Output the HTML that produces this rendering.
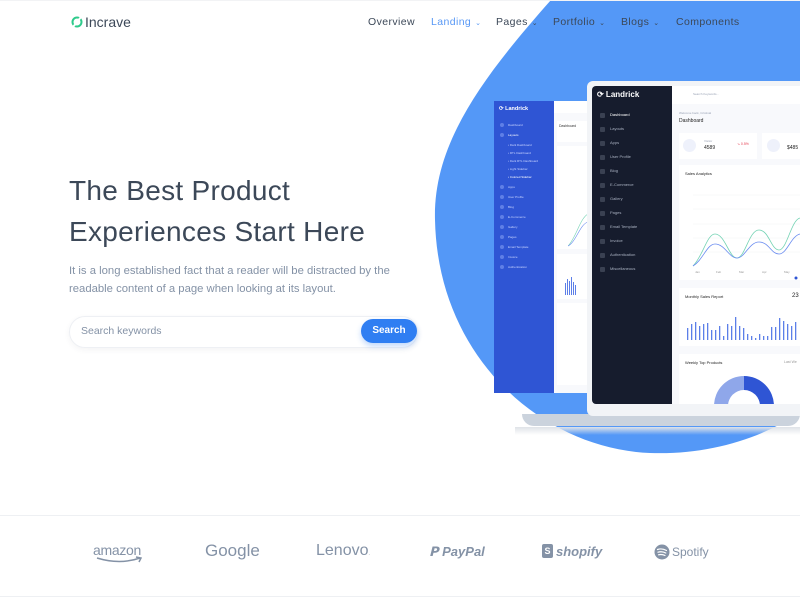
<!DOCTYPE html>
<html><head><meta charset="utf-8">
<style>
*{margin:0;padding:0;box-sizing:border-box}
body{width:800px;height:600px;overflow:hidden;background:#fff;font-family:"Liberation Sans",sans-serif;position:relative}
.abs{position:absolute}
.nav a{position:absolute;top:16px;font-size:10.5px;color:#3c4858;letter-spacing:.4px;white-space:nowrap}
.car{font-size:7px;margin-left:4px}
h1{position:absolute;left:69px;top:170px;font-size:28px;font-weight:normal;color:#3c4858;line-height:41px;letter-spacing:.3px}
.p{position:absolute;left:69px;top:262px;font-size:11.3px;color:#8492a6;line-height:18px;width:360px}
.t{font-size:3px;color:#9aa3b5;white-space:nowrap}
.d{font-size:4px;color:#a9b1c1;white-space:nowrap;position:absolute;left:18px}
.ic{position:absolute;left:8px;width:5px;height:5px;border-radius:1px;background:#3a4152}
.bi{position:absolute;left:6px;width:4px;height:4px;border-radius:50%;background:#5f7fe6}
.bl{position:absolute;font-size:3px;color:#c9d4ff;left:14px;white-space:nowrap}
.logo{position:absolute;top:543px;font-size:15px;color:#8492a6;white-space:nowrap}
</style></head><body>
<svg class="abs" style="left:0;top:0" width="800" height="600">
<path d="M551,0 L800,0 L800,412 C760,440 705,455 650,453 C545,449 438,360 435,220 C433,145 480,80 551,0 Z" fill="#5498f7"/>
<line x1="0" y1="515.5" x2="800" y2="515.5" stroke="#eef0f3"/>
<line x1="0" y1="596.5" x2="800" y2="596.5" stroke="#eef0f3"/>
<line x1="0" y1="0.5" x2="800" y2="0.5" stroke="#f2f3f5"/>
</svg>
<!-- header -->
<svg class="abs" style="left:70px;top:15px" width="14" height="14"><circle cx="7" cy="7" r="4.5" fill="none" stroke="#2eca8b" stroke-width="2"/><path d="M3,12 L11,2" stroke="#fff" stroke-width="2"/></svg>
<div class="abs" style="left:85px;top:14px;font-size:14px;color:#3c4858">Incrave</div>
<div class="nav">
<a style="left:368px">Overview</a>
<a style="left:431px;color:#5898f5">Landing<span class="car">⌄</span></a>
<a style="left:496px">Pages<span class="car">⌄</span></a>
<a style="left:553px">Portfolio<span class="car">⌄</span></a>
<a style="left:621px">Blogs<span class="car">⌄</span></a>
<a style="left:676px">Components</a>
</div>
<h1>The Best Product<br>Experiences Start Here</h1>
<div class="p">It is a long established fact that a reader will be distracted by the readable content of a page when looking at its layout.</div>
<div class="abs" style="left:69px;top:316px;width:349px;height:32px;border:1px solid #eef0f4;border-radius:16px;box-shadow:0 2px 6px rgba(60,72,88,.06)"></div>
<div class="abs" style="left:81px;top:325px;font-size:10.5px;color:#8492a6">Search keywords</div>
<div class="abs" style="left:361px;top:319px;width:56px;height:24px;border-radius:12px;background:#2f7ef2;color:#fff;font-size:10px;font-weight:bold;text-align:center;line-height:24px;box-shadow:0 3px 6px rgba(47,126,242,.3)">Search</div>

<!-- back dashboard -->
<div class="abs" style="left:494px;top:101px;width:60px;height:292px;background:#2f55d4">
<div class="abs" style="left:5px;top:5px;font-size:5.5px;color:#fff;font-weight:bold">⟳ Landrick</div>
<div class="bi" style="top:22px"></div><div class="bl" style="top:22px">Dashboard</div>
<div class="bi" style="top:32px"></div><div class="bl" style="top:32px;color:#fff">Layouts</div>
<div class="bl" style="top:42px">• Dark Dashboard</div>
<div class="bl" style="top:50px">• RTL Dashboard</div>
<div class="bl" style="top:58px">• Dark RTL Dashboard</div>
<div class="bl" style="top:66px">• Light Sidebar</div>
<div class="bl" style="top:74px;color:#fff">• Colored Sidebar</div>
<div class="bi" style="top:84px"></div><div class="bl" style="top:84px">Apps</div>
<div class="bi" style="top:94px"></div><div class="bl" style="top:94px">User Profile</div>
<div class="bi" style="top:104px"></div><div class="bl" style="top:104px">Blog</div>
<div class="bi" style="top:114px"></div><div class="bl" style="top:114px">E-Commerce</div>
<div class="bi" style="top:124px"></div><div class="bl" style="top:124px">Gallery</div>
<div class="bi" style="top:134px"></div><div class="bl" style="top:134px">Pages</div>
<div class="bi" style="top:144px"></div><div class="bl" style="top:144px">Email Template</div>
<div class="bi" style="top:154px"></div><div class="bl" style="top:154px">Invoice</div>
<div class="bi" style="top:164px"></div><div class="bl" style="top:164px">Authentication</div>
</div>
<div class="abs" style="left:554px;top:101px;width:34px;height:292px;background:#f8f9fc;overflow:hidden">
<div class="abs" style="left:0;top:0;width:34px;height:12px;background:#fff"></div>
<div class="abs" style="left:3px;top:20px;width:31px;height:21px;background:#fff"></div>
<div class="abs" style="left:3px;top:45px;width:31px;height:20px;background:#fff"></div>
<div class="abs" style="left:3px;top:60px;width:31px;height:88px;background:#fff"></div>
<div class="abs" style="left:3px;top:153px;width:31px;height:45px;background:#fff"></div>
<div class="abs" style="left:3px;top:202px;width:31px;height:82px;background:#fff"></div>
<div class="abs" style="left:5px;top:23px;font-size:3.5px;color:#333">Dashboard</div>
<svg class="abs" style="left:10px;top:170px" width="24" height="26"><g fill="#5c7fe8"><rect x="1" y="12" width="1" height="12"/><rect x="3" y="8" width="1" height="16"/><rect x="5" y="10" width="1" height="14"/><rect x="7" y="6" width="1" height="18"/><rect x="9" y="11" width="1" height="13"/><rect x="11" y="14" width="1" height="10"/></g></svg>
<svg class="abs" style="left:14px;top:107px" width="20" height="40"><path d="M0,38 C8,30 12,10 20,6" stroke="#74d3b4" fill="none" stroke-width=".6"/><path d="M0,38 C8,34 12,16 20,14" stroke="#6a8cf0" fill="none" stroke-width=".6"/></svg>
</div>

<!-- laptop base -->
<div class="abs" style="left:522px;top:414px;width:278px;height:12px;background:#cbd3dd;border-radius:0 0 40px 40px"></div>
<div class="abs" style="left:515px;top:427px;width:285px;height:8px;background:linear-gradient(#dfe3e8,rgba(255,255,255,0))"></div>
<!-- front laptop -->
<div class="abs" style="left:587px;top:81px;width:220px;height:335px;background:#f2f4f7;border-radius:6px"></div>
<div class="abs" style="left:592px;top:86px;width:80px;height:318px;background:#161c2d;border-radius:4px 0 0 4px">
<div class="abs" style="left:5px;top:4px;font-size:8px;color:#fff;font-weight:bold">⟳ Landrick</div>
<div class="ic" style="top:27px;background:#3a4152"></div><div class="d" style="top:26px;color:#fff">Dashboard</div>
<div class="ic" style="top:41px"></div><div class="d" style="top:40px">Layouts</div>
<div class="ic" style="top:55px"></div><div class="d" style="top:54px">Apps</div>
<div class="ic" style="top:69px"></div><div class="d" style="top:68px">User Profile</div>
<div class="ic" style="top:83px"></div><div class="d" style="top:82px">Blog</div>
<div class="ic" style="top:97px"></div><div class="d" style="top:96px">E-Commerce</div>
<div class="ic" style="top:111px"></div><div class="d" style="top:110px">Gallery</div>
<div class="ic" style="top:125px"></div><div class="d" style="top:124px">Pages</div>
<div class="ic" style="top:139px"></div><div class="d" style="top:138px">Email Template</div>
<div class="ic" style="top:153px"></div><div class="d" style="top:152px">Invoice</div>
<div class="ic" style="top:167px"></div><div class="d" style="top:166px">Authentication</div>
<div class="ic" style="top:181px"></div><div class="d" style="top:180px">Miscellaneous</div>
</div>
<div class="abs" style="left:672px;top:86px;width:128px;height:318px;background:#f8f9fc;overflow:hidden">
<div class="abs" style="left:0;top:0;width:128px;height:18px;background:#fff"></div>
<div class="abs t" style="left:21px;top:6px">Search Keywords...</div>
<div class="abs t" style="left:7px;top:25px">Welcome back, Cristinal</div>
<div class="abs" style="left:7px;top:32px;font-size:5px;color:#222">Dashboard</div>
<div class="abs" style="left:7px;top:47px;width:78px;height:26px;background:#fff"></div>
<div class="abs" style="left:11px;top:53px;width:13px;height:13px;border-radius:50%;background:#eef1fb"></div>
<div class="abs t" style="left:32px;top:53px">Visitor</div>
<div class="abs" style="left:32px;top:59px;font-size:5px;color:#222">4589</div>
<div class="abs" style="left:65px;top:56px;font-size:3.5px;color:#e43f52">↘ 0.5%</div>
<div class="abs" style="left:90px;top:47px;width:40px;height:26px;background:#fff"></div>
<div class="abs" style="left:95px;top:53px;width:13px;height:13px;border-radius:50%;background:#eef1fb"></div>
<div class="abs" style="left:115px;top:59px;font-size:5px;color:#222">$485</div>
<div class="abs" style="left:7px;top:79px;width:128px;height:115px;background:#fff"></div>
<div class="abs" style="left:13px;top:85px;font-size:4px;color:#222">Sales Analytics</div>
<svg class="abs" style="left:7px;top:100px" width="121" height="94">
<g stroke="#f0f1f4" stroke-width=".5"><line x1="14" y1="9" x2="121" y2="9"/><line x1="14" y1="23" x2="121" y2="23"/><line x1="14" y1="38" x2="121" y2="38"/><line x1="14" y1="52" x2="121" y2="52"/><line x1="14" y1="66" x2="121" y2="66"/></g>
<path d="M14,80 C24,70 28,48 36,48 C46,48 50,72 58,72 C66,72 70,44 80,44 C90,44 92,64 100,64 C108,64 112,34 121,32" stroke="#74d3b4" fill="none" stroke-width=".8"/>
<path d="M14,80 C24,74 28,58 36,58 C46,58 50,72 58,72 C66,72 70,56 80,56 C90,56 92,68 100,68 C108,68 112,50 121,48" stroke="#6a8cf0" fill="none" stroke-width=".8"/>
<g font-size="3" fill="#999" font-family="Liberation Sans"><text x="16" y="87">Jan</text><text x="37" y="87">Feb</text><text x="60" y="87">Mar</text><text x="83" y="87">Apr</text><text x="105" y="87">May</text></g>
<circle cx="117" cy="92" r="1.5" fill="#2f55d4"/>
</svg>
<div class="abs" style="left:7px;top:202px;width:128px;height:58px;background:#fff"></div>
<div class="abs" style="left:13px;top:208px;font-size:4px;color:#222">Monthly Sales Report</div>
<div class="abs" style="left:120px;top:207px;font-size:6px;color:#222">23</div>
<svg class="abs" style="left:15px;top:228px" width="113" height="30"><g fill="#5c7fe8">
<rect x="0" y="14" width="1.3" height="12"/><rect x="4" y="10" width="1.3" height="16"/><rect x="8" y="8" width="1.3" height="18"/><rect x="12" y="12" width="1.3" height="14"/><rect x="16" y="10" width="1.3" height="16"/><rect x="20" y="9" width="1.3" height="17"/><rect x="24" y="16" width="1.3" height="10"/><rect x="28" y="16" width="1.3" height="10"/><rect x="32" y="12" width="1.3" height="14"/><rect x="36" y="22" width="1.3" height="4"/><rect x="40" y="10" width="1.3" height="16"/><rect x="44" y="12" width="1.3" height="14"/><rect x="48" y="3" width="1.3" height="23"/><rect x="52" y="12" width="1.3" height="14"/><rect x="56" y="14" width="1.3" height="12"/><rect x="60" y="20" width="1.3" height="6"/><rect x="64" y="22" width="1.3" height="4"/><rect x="68" y="24" width="1.3" height="2"/><rect x="72" y="20" width="1.3" height="6"/><rect x="76" y="22" width="1.3" height="4"/><rect x="80" y="22" width="1.3" height="4"/><rect x="84" y="13" width="1.3" height="13"/><rect x="88" y="13" width="1.3" height="13"/><rect x="92" y="4" width="1.3" height="22"/><rect x="96" y="7" width="1.3" height="19"/><rect x="100" y="10" width="1.3" height="16"/><rect x="104" y="12" width="1.3" height="14"/><rect x="108" y="8" width="1.3" height="18"/></g></svg>
<div class="abs" style="left:7px;top:268px;width:128px;height:60px;background:#fff"></div>
<div class="abs" style="left:13px;top:274px;font-size:4px;color:#222">Weekly Top Products</div>
<div class="abs" style="left:112px;top:274px;font-size:3.5px;color:#999">Last We</div>
<svg class="abs" style="left:40px;top:288px" width="64" height="30"><path d="M32,2 A30,30 0 0 1 62,32 L48,32 A16,16 0 0 0 32,16 Z" fill="#2f55d4"/><path d="M32,2 A30,30 0 0 0 2,32 L16,32 A16,16 0 0 1 32,16 Z" fill="#8fa7ea"/></svg>
</div>

<!-- logos -->
<div class="logo" style="left:93px;font-size:14px;letter-spacing:-.3px;top:542px">amazon</div>
<svg class="abs" style="left:96px;top:556px" width="48" height="8"><path d="M1,2 Q24,9 44,2 M40,1 L45,2 L43,6" stroke="#8492a6" fill="none" stroke-width="1.5"/></svg>
<div class="logo" style="left:205px;font-size:17px;top:541px">Google</div>
<div class="logo" style="left:316px;font-size:16px;top:542px">Lenovo<span style="font-size:5px">.</span></div>
<div class="logo" style="left:429px;font-size:13px;font-weight:bold;font-style:italic;top:544px">𝗣 PayPal</div>
<div class="abs" style="left:542px;top:544px;width:11px;height:14px;background:#8492a6;border-radius:2px;color:#fff;font-size:9px;font-weight:bold;text-align:center;line-height:14px">S</div>
<div class="logo" style="left:556px;font-size:13px;font-weight:bold;font-style:italic;top:544px">shopify</div>
<svg class="abs" style="left:654px;top:544px" width="16" height="16"><circle cx="8" cy="8" r="7.5" fill="#8492a6"/><path d="M3.5,5.5 Q8,4 12.5,6.5 M4,8.2 Q8,7 11.8,9 M4.5,10.8 Q8,10 11,11.5" stroke="#fff" stroke-width="1.2" fill="none" stroke-linecap="round"/></svg>
<div class="logo" style="left:672px;font-size:12px;top:545px">Spotify</div>
</body></html>
